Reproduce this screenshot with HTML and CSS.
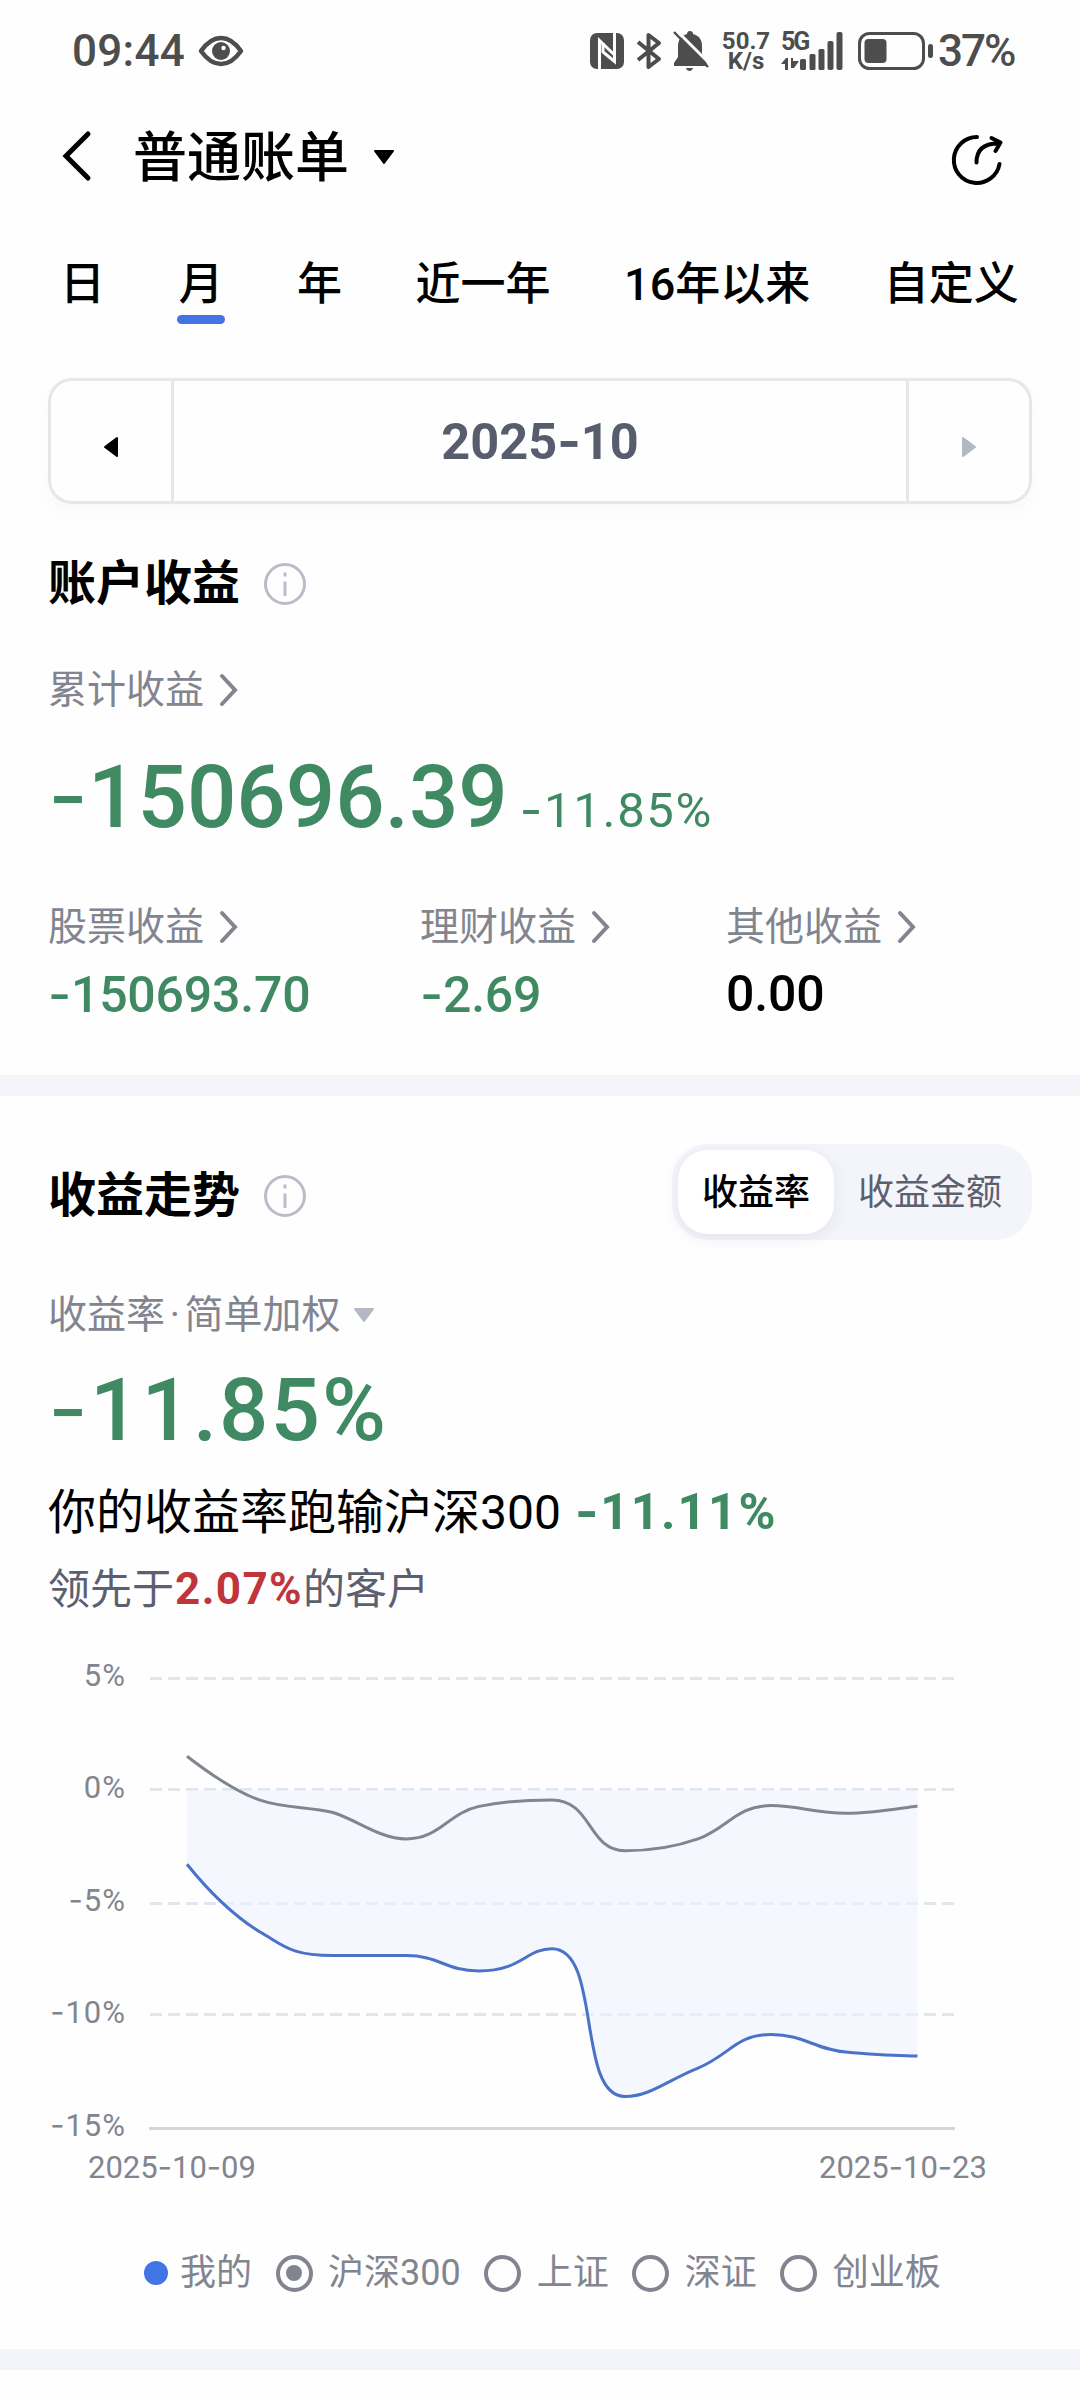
FILE: index.html
```html
<!DOCTYPE html>
<html lang="zh-CN">
<head>
    <meta charset="UTF-8">
    <meta name="viewport" content="width=device-width, initial-scale=1.0">
    <title>普通账单</title>
    <link rel="stylesheet" href="styles.css">
</head>
<body>
    <div class="page">
        <div class="status-bar">
            <div class="status-left">
                <span class="clock">09:44</span>
                <svg class="icon-eye" width="46" height="32" viewBox="0 0 46 32">
                    <path d="M3 16C9 7.500 15 3 23 3s14 4.500 20 13c-6 8.500-12 13-20 13S9 24.500 3 16z" fill="none" stroke="#4d4d4d" stroke-width="4.500" stroke-linejoin="round"/>
                    <circle cx="23" cy="16" r="9" fill="#4d4d4d"/>
                    <circle cx="25.500" cy="13" r="2.200" fill="#fff"/>
                </svg>
            </div>
            <div class="status-right">
                <svg width="34" height="36" viewBox="0 0 34 36">
                    <rect x="0" y="0" width="34" height="36" rx="7" fill="#4d4d4d"/>
                    <path d="M9.500 36V7.500L24.500 22" fill="none" stroke="#fff" stroke-width="3"/>
                    <path d="M24.500 0V28.500L13 19V10" fill="none" stroke="#fff" stroke-width="3"/>
                </svg>
                <svg class="icon-bt" width="26" height="38" viewBox="0 0 26 38">
                    <path d="M2 10L23 27L12.500 35V3L23 11L2 28" fill="none" stroke="#4d4d4d" stroke-width="4" stroke-linejoin="round"/>
                </svg>
                <svg class="icon-bell" width="36" height="42" viewBox="0 0 36 42">
                    <path d="M17 1c2 0 3 1 3 3 6 1.500 9 6 9 12v8l5 10v2H1v-3l4-6V16C5 10 8 5.500 14 4c0-2 1-3 3-3z" fill="#4d4d4d"/>
                    <path d="M13 38h7c-.5 2-2 3-3.500 3S13.500 40 13 38z" fill="#4d4d4d"/>
                    <path d="M2 -1L38 35" stroke="#fefefe" stroke-width="3"/>
                    <path d="M1 2L35 37" stroke="#4d4d4d" stroke-width="2.500"/>
                </svg>
                <div class="net-speed"><span>50.7</span><span>K/s</span></div>
                <svg class="icon-signal" width="62" height="48" viewBox="0 -8 62 48">
                    <text x="0" y="18.500" class="net-type">5G</text>
                    <g fill="#4d4d4d">
                        <path d="M0 33l5-6h2v12H4v-6zM10 27h2v3h6l-5 7h-3z"/>
                        <rect x="19" y="28" width="6" height="11" rx="1.500"/>
                        <rect x="28.500" y="23" width="6" height="16" rx="1.500"/>
                        <rect x="37.500" y="18" width="6" height="21" rx="1.500"/>
                        <rect x="46.500" y="10" width="6" height="29" rx="2"/>
                        <rect x="55.500" y="1" width="6" height="38" rx="2"/>
                    </g>
                </svg>
                <svg class="icon-battery" width="76" height="38" viewBox="0 0 76 38">
                    <rect x="1.500" y="1.500" width="64" height="35" rx="10" fill="none" stroke="#4d4d4d" stroke-width="3"/>
                    <rect x="6.500" y="7" width="22" height="24" rx="4" fill="#4d4d4d"/>
                    <rect x="70" y="12" width="5" height="14" rx="2.500" fill="#4d4d4d"/>
                </svg>
                <span class="battery-text">37%</span>
            </div>
        </div>

        <div class="nav-bar">
            <svg class="nav-back" width="30" height="52" viewBox="0 0 30 52">
                <path d="M26 4L4 26l22 22" fill="none" stroke="#000" stroke-width="5" stroke-linecap="round"/>
            </svg>
            <h1 class="nav-title">普通账单</h1>
            <svg class="nav-caret" width="22" height="15" viewBox="0 0 22 15">
                <path d="M2 1h18L11 13z" fill="#000" stroke="#000" stroke-width="2" stroke-linejoin="round"/>
            </svg>
            <svg class="nav-share" width="54" height="54" viewBox="0 0 54 54" fill="none" stroke="#000" stroke-width="4" stroke-linecap="round" stroke-linejoin="round">
                <path d="M27 4A23 23 0 1 0 49.500 31"/>
                <path d="M26.500 29.500C26.500 17 34 10.500 48 10.500M41.500 5L50.500 9.500L45.500 18"/>
            </svg>
        </div>

        <div class="tabs">
            <div class="tab">日</div>
            <div class="tab active">月</div>
            <div class="tab">年</div>
            <div class="tab">近一年</div>
            <div class="tab">16年以来</div>
            <div class="tab">自定义</div>
        </div>

        <div class="date-picker">
            <div class="date-btn">
                <svg width="16" height="22" viewBox="0 0 16 22"><path d="M14 2v18L2 11z" fill="#000" stroke="#000" stroke-width="2" stroke-linejoin="round"/></svg>
            </div>
            <div class="date-value">2025<span class="minus">-</span>10</div>
            <div class="date-btn">
                <svg width="16" height="22" viewBox="0 0 16 22"><path d="M2 2v18l12-9z" fill="#b4b8c5" stroke="#b4b8c5" stroke-width="2" stroke-linejoin="round"/></svg>
            </div>
        </div>

        <div class="section account">
            <div class="section-title">
                <h2>账户收益</h2>
                <svg class="icon-info" width="42" height="42" viewBox="0 0 42 42"><circle cx="21" cy="21" r="19.500"/><path d="M21 18.500V33M21 9.500v4"/></svg>
            </div>
            <div class="label total-label">累计收益<svg class="chevron" width="20" height="34" viewBox="0 0 20 34"><path d="M3 3l13 14L3 31"/></svg></div>
            <div class="total">
                <span class="big-number"><span class="minus">-</span>150696.39</span>
                <span class="total-rate"><span class="minus">-</span>11.85%</span>
            </div>
            <div class="stats">
                <div class="stat">
                    <div class="label">股票收益<svg class="chevron" width="20" height="34" viewBox="0 0 20 34"><path d="M3 3l13 14L3 31"/></svg></div>
                    <div class="stat-value down"><span class="minus">-</span>150693.70</div>
                </div>
                <div class="stat">
                    <div class="label">理财收益<svg class="chevron" width="20" height="34" viewBox="0 0 20 34"><path d="M3 3l13 14L3 31"/></svg></div>
                    <div class="stat-value down"><span class="minus">-</span>2.69</div>
                </div>
                <div class="stat">
                    <div class="label">其他收益<svg class="chevron" width="20" height="34" viewBox="0 0 20 34"><path d="M3 3l13 14L3 31"/></svg></div>
                    <div class="stat-value">0.00</div>
                </div>
            </div>
        </div>

        <div class="divider"></div>

        <div class="section trend">
            <div class="trend-header">
                <div class="section-title">
                    <h2>收益走势</h2>
                    <svg class="icon-info" width="42" height="42" viewBox="0 0 42 42"><circle cx="21" cy="21" r="19.500"/><path d="M21 18.500V33M21 9.500v4"/></svg>
                </div>
                <div class="segment">
                    <div class="segment-item active">收益率</div>
                    <div class="segment-item">收益金额</div>
                </div>
            </div>
            <div class="label trend-label">收益率<span class="dot">·</span>简单加权<svg class="label-caret" width="22" height="15" viewBox="0 0 22 15"><path d="M2 1h18L11 13z" fill="#b4b8c5" stroke="#b4b8c5" stroke-width="2" stroke-linejoin="round"/></svg></div>
            <div class="big-number trend-rate"><span class="minus">-</span>11.85%</div>
            <p class="compare">你的收益率跑输沪深300<strong><span class="minus">-</span>11.11%</strong></p>
            <p class="rank">领先于<strong>2.07%</strong>的客户</p>
        </div>

        <svg class="chart" width="1080" height="580" viewBox="0 1620 1080 580">
            <g class="grid">
                <path d="M150 1678.500H955M150 1789.500H955M150 1903.500H955M150 2014.500H955"/>
            </g>
            <path class="axis" d="M149 2128.500H955"/>
            <path class="area" d="M187 1790V1864.200C211.300 1894.500 235.700 1917 260 1932C283 1945 290 1955.600 333 1955.600H406C440 1955.600 445 1970.900 479 1970.900C522 1970.900 526 1948.700 552 1948.700C602 1948.700 576 2096.500 625 2096.500C650 2096.500 668 2080 698 2068.100C730 2055 736 2034.500 771 2034.500C805 2034.500 815 2050 848 2052.300C872 2054 892 2055.900 917.500 2055.900V1790z"/>
            <path class="line-index" d="M187 1756.200C211.300 1775 235.700 1791.900 260 1800.200C284.300 1808.500 308.700 1806.500 333 1812.500C357.300 1820 380 1838.900 406 1838.900C440 1838.900 448 1813 479 1806.400C503 1801.500 527 1799.900 552 1799.900C592 1799.900 588 1850.800 625 1850.800C648 1850.800 675 1847 698 1838.900C728 1828 736 1805.600 771 1805.600C798 1805.600 815 1813.300 846 1813.300C872 1813.300 892 1809.500 917.500 1806"/>
            <path class="line-mine" d="M187 1864.200C211.300 1894.500 235.700 1917 260 1932C283 1945 290 1955.600 333 1955.600H406C440 1955.600 445 1970.900 479 1970.900C522 1970.900 526 1948.700 552 1948.700C602 1948.700 576 2096.500 625 2096.500C650 2096.500 668 2080 698 2068.100C730 2055 736 2034.500 771 2034.500C805 2034.500 815 2050 848 2052.300C872 2054 892 2055.900 917.500 2055.900"/>
            <g class="y-labels">
                <text x="126" y="1685.500">5%</text>
                <text x="126" y="1797.500">0%</text>
                <text x="126" y="1910.500"><tspan class="minus">-</tspan>5%</text>
                <text x="126" y="2022.500"><tspan class="minus">-</tspan>10%</text>
                <text x="126" y="2135.500"><tspan class="minus">-</tspan>15%</text>
            </g>
            <g class="x-labels">
                <text x="172" y="2177.500">2025<tspan class="minus">-</tspan>10<tspan class="minus">-</tspan>09</text>
                <text x="903" y="2177.500">2025<tspan class="minus">-</tspan>10<tspan class="minus">-</tspan>23</text>
            </g>
        </svg>

        <div class="legend">
            <div class="legend-item mine"><i class="legend-dot"></i>我的</div>
            <div class="legend-item"><i class="radio checked"></i>沪深300</div>
            <div class="legend-item"><i class="radio"></i>上证</div>
            <div class="legend-item"><i class="radio"></i>深证</div>
            <div class="legend-item"><i class="radio"></i>创业板</div>
        </div>

        <div class="divider"></div>
    </div>
</body>
</html>
```
FILE: styles.css
```css
* {
    margin: 0;
    padding: 0;
    box-sizing: border-box;
}

body {
    font-family: Roboto, 'Noto Sans CJK SC', sans-serif;
    background: #fefefe;
    color: #000;
}

svg {
    display: block;
    flex-shrink: 0;
}

.page {
    width: 1080px;
    height: 2400px;
    overflow: hidden;
}

.minus {
    font-family: Inter, sans-serif;
}

/* status bar */
.status-bar {
    display: flex;
    justify-content: space-between;
    align-items: center;
    height: 102px;
    padding: 0 65px 0 72px;
    color: #4d4d4d;
}

.status-left,
.status-right {
    display: flex;
    align-items: center;
}

.clock,
.battery-text {
    font-size: 44px;
    font-weight: 500;
    line-height: 50px;
}

.clock {
    letter-spacing: 0.3px;
}

.icon-eye {
    margin-left: 13px;
}

.icon-bt {
    margin-left: 12px;
}

.icon-bell {
    margin-left: 11px;
}

.net-speed {
    display: flex;
    flex-direction: column;
    align-items: center;
    width: 52px;
    margin-left: 11px;
    font-size: 24px;
    font-weight: 700;
    line-height: 20px;
}

.icon-signal {
    margin: -8px 0 0 9px;
}

.net-type {
    font-size: 25px;
    font-weight: 700;
    letter-spacing: -2px;
    fill: #4d4d4d;
}

.icon-battery {
    margin-left: 15px;
}

.battery-text {
    width: 77px;
    margin-left: 4px;
    letter-spacing: -2px;
}

/* navigation */
.nav-bar {
    display: flex;
    align-items: center;
    height: 108px;
    padding: 0 76px 0 62px;
}

.nav-title {
    margin-left: 41px;
    font-size: 54px;
    font-weight: 500;
    line-height: 64px;
    padding-top: 5px;
}

.nav-caret {
    margin: 3px 0 0 24px;
}

.nav-share {
    margin: 8px 0 0 auto;
}

.tabs {
    display: flex;
    gap: 73.5px;
    padding: 45px 60px 0;
    font-size: 45px;
    font-weight: 500;
    line-height: 60px;
    white-space: nowrap;
}

.tab::after {
    content: '';
    display: block;
    height: 9px;
    margin: 0 -1.5px;
    border-radius: 5px;
}

.tab.active::after {
    background: #4374e5;
}

.date-picker {
    display: flex;
    height: 126px;
    margin: 54px 48px 0;
    border: 3px solid #e6e7ea;
    border-radius: 24px;
    box-shadow: 0 6px 16px rgba(90, 100, 130, 0.04);
}

.date-btn {
    display: flex;
    align-items: center;
    justify-content: center;
    width: 120px;
    padding-top: 12px;
}

.date-value {
    flex: 1;
    border: solid #e6e7ea;
    border-width: 0 3px;
    color: #585d6e;
    font-size: 50.5px;
    font-weight: 700;
    line-height: 119px;
    text-align: center;
}

/* account section */
.section {
    padding: 0 48px;
}

.section-title {
    display: flex;
    align-items: center;
}

.section-title h2 {
    font-size: 48px;
    font-weight: 700;
    line-height: 60px;
}

.icon-info {
    margin-left: 24px;
    fill: none;
    stroke: #b9bdca;
    stroke-width: 3;
}

.account {
    height: 571px;
    padding-top: 50px;
}

.label {
    display: flex;
    align-items: center;
    color: #82858f;
    font-size: 39px;
    line-height: 50px;
}

.chevron {
    margin-left: 15px;
    fill: none;
    stroke: #82858f;
    stroke-width: 4;
    stroke-linecap: round;
}

.total-label {
    margin-top: 51px;
}

.total {
    display: flex;
    align-items: baseline;
    height: 100px;
    margin-top: 31px;
    color: #3f8a62;
}

.big-number {
    color: #3f8a62;
    font-size: 87px;
    font-weight: 500;
    line-height: 100px;
}

.big-number .minus {
    font-weight: 400;
}

.total-rate {
    margin-left: 12px;
    font-size: 49px;
    letter-spacing: 1.7px;
}

.stats {
    display: flex;
    margin-top: 56px;
}

.stat:nth-child(1) {
    width: 372px;
}

.stat:nth-child(2) {
    width: 306px;
}

.stat-value {
    margin-top: 12px;
    font-size: 50px;
    font-weight: 500;
    letter-spacing: -0.2px;
    line-height: 60px;
}

.down {
    color: #3f8a62;
}

.divider {
    height: 21px;
    background: #f4f5fa;
}

/* trend section */
.trend {
    height: 524px;
    padding-top: 48px;
}

.trend-header {
    display: flex;
    justify-content: space-between;
    align-items: center;
    height: 96px;
}

.trend-header .section-title {
    padding-top: 8px;
}

.segment {
    display: flex;
    height: 96px;
    padding: 6px;
    border-radius: 36px;
    background: #f4f5fa;
}

.segment-item {
    padding: 0 24px;
    border-radius: 30px;
    color: #5b6070;
    font-size: 36px;
    line-height: 87px;
}

.segment-item.active {
    background: #fff;
    color: #000;
    font-weight: 500;
    box-shadow: 0 4px 16px rgba(40, 45, 60, 0.08);
}

.trend-label {
    margin-top: 50px;
}

.dot {
    width: 19.5px;
    text-align: center;
}

.label-caret {
    margin-left: 12px;
}

.trend-rate {
    margin-top: 19px;
    letter-spacing: 2px;
}

.compare {
    margin-top: 21px;
    font-size: 48px;
    line-height: 60px;
}

.compare strong {
    margin-left: 14px;
    color: #3f8a62;
    font-size: 50px;
    letter-spacing: 1.8px;
}

.rank {
    margin-top: 16px;
    color: #5b6070;
    font-size: 42px;
    line-height: 60px;
}

.rank strong {
    margin-left: 1px;
    color: #c0353c;
    font-size: 44px;
    letter-spacing: 1.4px;
}

/* chart */
.chart path {
    fill: none;
    stroke-width: 3;
}

.grid {
    stroke: #e1e5ec;
    stroke-dasharray: 12 6;
}

.axis {
    stroke: #d4d7da;
}

.chart .area {
    fill: rgba(237, 244, 253, 0.6);
}

.line-index {
    stroke: #82858f;
}

.line-mine {
    stroke: #4a72c8;
}

.y-labels,
.x-labels {
    fill: #82858f;
    font-size: 31px;
}

.y-labels {
    text-anchor: end;
    letter-spacing: 1px;
}

.x-labels {
    text-anchor: middle;
}

/* legend */
.legend {
    display: flex;
    gap: 23.5px;
    height: 60px;
    margin: 43px 0 46px;
    padding-left: 144px;
    color: #82858f;
    font-size: 36px;
    line-height: 60px;
}

.legend-item {
    display: flex;
    align-items: center;
    gap: 15.5px;
}

.legend-item.mine {
    gap: 12px;
}

.legend-dot {
    width: 24px;
    height: 24px;
    border-radius: 50%;
    background: #4374e5;
}

.radio {
    display: flex;
    align-items: center;
    justify-content: center;
    width: 37px;
    height: 37px;
    border: 4px solid #82858f;
    border-radius: 50%;
}

.radio.checked::after {
    content: '';
    width: 16px;
    height: 16px;
    border-radius: 50%;
    background: #82858f;
}
```
